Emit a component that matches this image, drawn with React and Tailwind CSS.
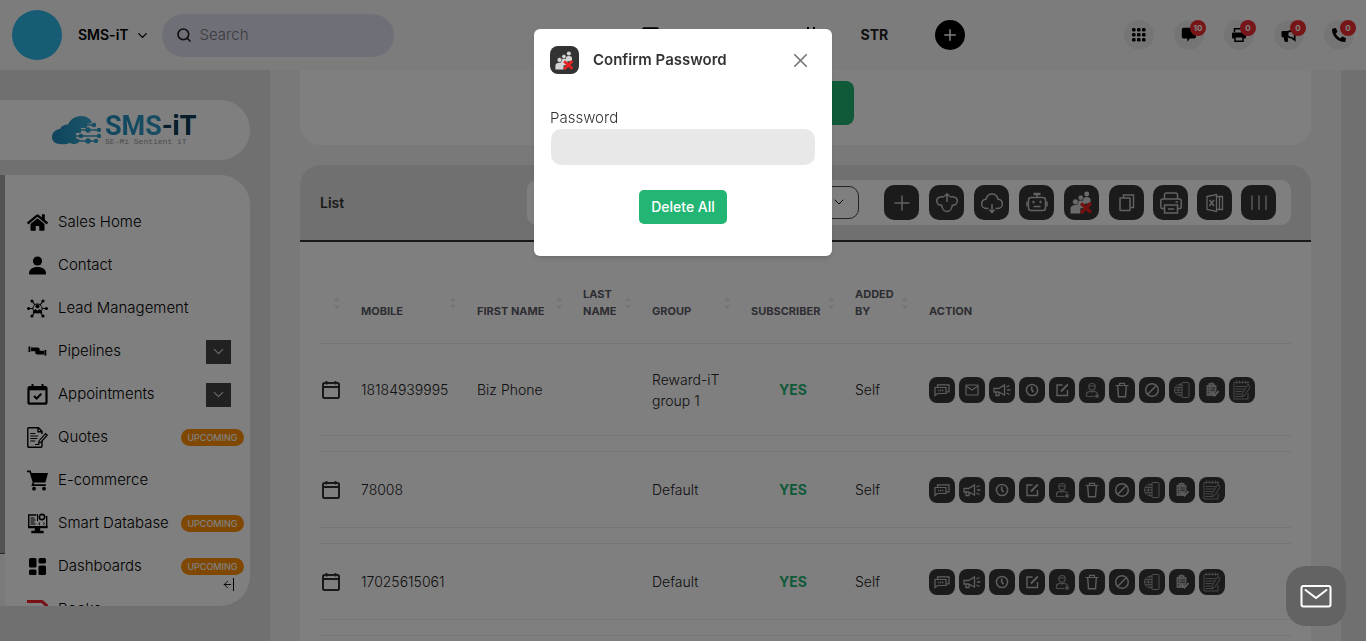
import React, { useState } from 'react';
import { ChevronDown, Search, Plus, X, ArrowLeft } from 'lucide-react';
import { FaHome, FaPhoneAlt, FaUser, FaRegSquare, FaSquare, FaCalendar } from 'react-icons/fa';

const NAV_ITEMS = [
  { label: 'Sales Home', icon: 'home' },
  { label: 'Contact', icon: 'contact' },
  { label: 'Lead Management', icon: 'lead' },
  { label: 'Pipelines', icon: 'pipeline', expandable: true },
  { label: 'Appointments', icon: 'appointment', expandable: true },
  { label: 'Quotes', icon: 'quote', upcoming: true },
  { label: 'E-commerce', icon: 'cart' },
  { label: 'Smart Database', icon: 'database', upcoming: true },
  { label: 'Dashboards', icon: 'dashboard', upcoming: true },
  { label: 'Books', icon: 'books' },
];

const COLUMNS = [
  { key: 'select', label: '', width: 'w-[41px]' },
  { key: 'mobile', label: 'Mobile', width: 'w-[116px]' },
  { key: 'first', label: 'First Name', width: 'w-[106px]' },
  { key: 'last', label: 'Last Name', width: 'w-[69px]' },
  { key: 'group', label: 'Group', width: 'w-[99px]' },
  { key: 'subscriber', label: 'Subscriber', width: 'w-[104px]' },
  { key: 'added', label: 'Added By', width: 'w-[74px]' },
];

const BASE_ACTIONS = ['campaign', 'clock', 'edit', 'person', 'trash', 'block', 'globe', 'clipboard', 'notes'];

const ROWS = [
  { mobile: '18184939995', first: 'Biz Phone', group: 'Reward-iT group 1', actions: ['chat', 'mail', ...BASE_ACTIONS], height: 'h-[93px]' },
  { mobile: '78008', first: '', group: 'Default', actions: ['chat', ...BASE_ACTIONS], height: 'h-[77px]' },
  { mobile: '17025615061', first: '', group: 'Default', actions: ['chat', ...BASE_ACTIONS], height: 'h-[77px]' },
];

function NavIcon({ name }) {
  switch (name) {
    case 'home':
      return <FaHome size={21} />;
    case 'contact':
      return (
        <svg width="21" height="21" viewBox="0 0 21 21" fill="currentColor">
          <circle cx="10.500" cy="6" r="4.600" />
          <path d="M2 18.500c0-4.200 3.600-6.500 8.500-6.500s8.500 2.300 8.500 6.500c0 .6-.3 1-1 1H3c-.7 0-1-.4-1-1z" />
        </svg>
      );
    case 'lead':
      return (
        <svg width="21" height="21" viewBox="0 0 21 21" fill="currentColor" stroke="currentColor">
          <path d="M5 3l3 4M16 3l-3 4M2 10.500h4M15 10.500h4M5 18l3-4M16 18l-3-4" strokeWidth="1.200" />
          <circle cx="10.500" cy="10.500" r="4.600" fill="none" strokeWidth="1" />
          <g stroke="none">
            <circle cx="5" cy="3" r="1.600" />
            <circle cx="16" cy="3" r="1.600" />
            <circle cx="1.600" cy="10.500" r="1.600" />
            <circle cx="19.400" cy="10.500" r="1.600" />
            <circle cx="5" cy="18" r="1.600" />
            <circle cx="16" cy="18" r="1.600" />
            <circle cx="10.500" cy="8.300" r="2" />
            <path d="M5.800 15c0-2.600 1.700-3.800 3.200-3.800l1.500 1.600 1.500-1.600c1.500 0 3.200 1.200 3.200 3.800z" />
          </g>
        </svg>
      );
    case 'pipeline':
      return (
        <svg width="21" height="21" viewBox="0 0 21 21" fill="currentColor">
          <path d="M1.500 5.500h1.800v5.500H1.500zM4 6.500h6.500c1.600 0 2.200.8 2.200 2v1.300H16v3.800h-5.500c-1.600 0-2.200-.8-2.200-2v-1.300H4z" />
          <path d="M17.400 9h1.900v5.600h-1.900zM16 9.800h1v3.800h-1z" />
        </svg>
      );
    case 'appointment':
      return (
        <svg width="21" height="21" viewBox="0 0 21 21" fill="none" stroke="currentColor">
          <rect x="1.500" y="3" width="18" height="16.700" rx="1.500" strokeWidth="2.200" />
          <path d="M1 4.500h19" strokeWidth="3.600" />
          <path d="M5.500 0v4M15.500 0v4" strokeWidth="2" />
          <path d="M7 12l2.600 2.500 4.700-4.800" strokeWidth="2" />
        </svg>
      );
    case 'quote':
      return (
        <svg width="21" height="21" viewBox="0 0 21 21" fill="none" stroke="currentColor" strokeWidth="1.400">
          <path d="M15 14v5.300a1 1 0 0 1-1 1H1.800a1 1 0 0 1-1-1V1.700a1 1 0 0 1 1-1h9.700L15 4.300V7" />
          <path d="M11 1v3.700h4" />
          <path d="M3.300 6.500h5M3.300 9h8M3.300 11.500h7M3.300 14h5M8 17.500h4.500" strokeWidth="1.100" />
          <path d="M18.500 6.700l1.700 1.500-6.300 7-2.300.9.600-2.400z" strokeWidth="1.200" />
        </svg>
      );
    case 'cart':
      return (
        <svg width="21" height="21" viewBox="0 0 21 21" fill="currentColor">
          <path d="M0 .5h3.600l1 2.500H21l-2.600 9.500H7.200l-.6 1.800h12.200V16H4.300l1.400-3.800L2.500 2.300H0z" />
          <circle cx="7" cy="18.700" r="1.900" />
          <circle cx="17" cy="18.700" r="1.900" />
        </svg>
      );
    case 'database':
      return (
        <svg width="21" height="21" viewBox="0 0 21 21" fill="none" stroke="currentColor" strokeWidth="1.400">
          <path d="M9.500 2H1.700v12.500h18V3" />
          <path d="M3.500 5h4M3.500 7h5M3.500 9h4M3.500 11h5M13 9.500l-1.300 1.200L13 11.900M16.300 9.500l1.300 1.200-1.300 1.200M10.500 1v7" strokeWidth="1" />
          <circle cx="15" cy="4" r="2.700" strokeWidth="1.700" />
          <path d="M1 14h19.500" strokeWidth="2" />
          <path d="M8.500 15h4v3h-4zM5 18.500h11v1H5z" fill="currentColor" />
        </svg>
      );
    case 'dashboard':
      return (
        <svg width="21" height="21" viewBox="0 0 21 21" fill="currentColor">
          <rect x="2" y="2" width="7.500" height="9.500" rx="1.500" />
          <rect x="11.500" y="2" width="7.500" height="5.500" rx="1.500" />
          <rect x="2" y="13.500" width="7.500" height="5.500" rx="1.500" />
          <rect x="11.500" y="9.500" width="7.500" height="9.500" rx="1.500" />
        </svg>
      );
    default:
      return (
        <svg width="21" height="21" viewBox="0 0 21 21" fill="none" stroke="#f0222c" strokeWidth="3">
          <path d="M0 2.500h15l4.500 4V19" />
        </svg>
      );
  }
}

function GroupDeleteIcon({ size }) {
  return (
    <svg width={size} height={size} viewBox="0 0 24 24">
      <g fill="#d4d4d4">
        <circle cx="17.500" cy="3.200" r="2.600" />
        <path d="M13.500 13V9.500c0-2.500 1.700-3.300 4-3.300s4 .8 4 3.300V13z" />
        <circle cx="11.300" cy="7" r="2.700" stroke="#363636" strokeWidth=".6" />
        <path d="M7 18v-4.700c0-2.400 1.800-3.400 4.300-3.400s4.300 1 4.300 3.400V18z" />
        <circle cx="5.700" cy="11.300" r="3" stroke="#363636" strokeWidth=".6" />
        <path d="M.5 23.500v-4.800c0-2.800 2-4 5.200-4s5.200 1.200 5.200 4v4.800z" />
      </g>
      <path d="M11.500 13l10.500 9.500M22 12.500L11.500 23" stroke="#e62222" strokeWidth="3.600" />
    </svg>
  );
}

function ToolIcon({ name }) {
  const props = { width: 24, height: 24, viewBox: '0 0 24 24', fill: 'none', stroke: '#c4c4c4', strokeWidth: 1.5 };
  switch (name) {
    case 'add':
      return <svg {...props}><path d="M12 4.500v15M4.500 12h15" /></svg>;
    case 'upload':
      return (
        <svg {...props}>
          <path d="M9 6C5.500 5 1.500 6.500 1.700 10c.2 3 2.500 4.600 5 4.300C7.200 18 9.500 20.500 12 20.500s4.800-2.500 5.300-6.200c2.500.3 4.800-1.300 5-4.300.2-3.500-3.800-5-7.300-4" />
          <path d="M12 11V3M9.300 5.500L12 2.800l2.700 2.700" />
        </svg>
      );
    case 'download':
      return (
        <svg {...props}>
          <path d="M8.500 17.500H7c-3.200 0-5.300-2-5.300-4.600 0-2.500 1.800-4.400 4.300-4.600C6.700 5 9 3 12 3s5.300 2 6 5.300c2.500.2 4.300 2.100 4.300 4.600 0 2.600-2.100 4.600-5.300 4.600h-1.500" />
          <path d="M12 13v8M9.300 18.700l2.700 2.700 2.700-2.700" />
        </svg>
      );
    case 'robot':
      return (
        <svg {...props}>
          <rect x="3.500" y="6.500" width="17" height="13" rx="2.500" />
          <path d="M12 6.500V4M2 10.500v5M22 10.500v5M8.500 15.500h7" />
          <path d="M8.500 3h7" strokeWidth="2.500" />
          <path d="M7.500 11h2M14.500 11h2" strokeWidth="2.500" />
        </svg>
      );
    case 'group':
      return <GroupDeleteIcon size={23} />;
    case 'copy':
      return (
        <svg {...props}>
          <rect x="5" y="7" width="10" height="12.500" rx=".5" />
          <path d="M8.500 6.500V4H18.500v12.500H15.500" />
        </svg>
      );
    case 'print':
      return (
        <svg {...props}>
          <path d="M5.500 8V4c0-1.200.8-2 2-2h9c1.200 0 2 .8 2 2v4M5.500 17.500H3.300c-1 0-1.500-.6-1.500-1.500V10c0-1.200.8-2 2-2h16.400c1.200 0 2 .8 2 2v6c0 .9-.5 1.500-1.500 1.500h-2.200" />
          <path d="M5.500 14h13v8h-13zM9 18h6M16.500 11h2.500" />
        </svg>
      );
    case 'excel':
      return (
        <svg {...props} strokeWidth="1.300">
          <path d="M4 5.500L13.500 3.500v17L4 18.500zM13.500 5.500h6v13h-6M16.500 5.500v13" />
          <path d="M6.500 9l4.500 6M11 9l-4.500 6" strokeWidth="1.600" />
        </svg>
      );
    default:
      return <svg {...props} strokeWidth="1.300"><path d="M5 4.500v14.500M12 4.500v14.500M19 4.500v14.500" /></svg>;
  }
}

function ActionIcon({ name }) {
  const props = { width: 18, height: 18, viewBox: '0 0 18 18', fill: 'none', stroke: '#bdbdbd', strokeWidth: 1.2 };
  switch (name) {
    case 'chat':
      return (
        <svg {...props}>
          <path d="M2 14.500V6.500h11v6H4.500z" />
          <path d="M4.500 6.300V3.800h11.500v7h-2.700" />
          <path d="M5 9.500h1.300M7 9.500h1.300M9 9.500h1.300" strokeWidth="1.500" />
        </svg>
      );
    case 'mail':
      return <svg {...props}><rect x="3" y="4" width="12" height="10" rx=".6" /><path d="M3 5l6 4 6-4" /></svg>;
    case 'campaign':
      return (
        <svg {...props} strokeWidth="1.300">
          <path d="M1 7.500h4.500L11.500 4v10l-6-3H1zM3 11v3.500h3V11M13.500 6l3-1.500M14 9h3.500M13.500 12l3 1.500" />
        </svg>
      );
    case 'clock':
      return <svg {...props}><circle cx="9" cy="9" r="5.600" strokeWidth="1.500" /><path d="M8.700 5.500v3.300l1.800 2.500" strokeWidth="1.600" /></svg>;
    case 'edit':
      return <svg {...props}><path d="M9.500 4H4v10.500h10.500V9" strokeWidth="1.400" /><path d="M8 10.500L14.800 3.500" strokeWidth="1.800" /></svg>;
    case 'person':
      return (
        <svg {...props} stroke="#999">
          <path d="M5.800 5.500c0-4 6.400-4 6.400 0 0 2-1.300 3.700-3.200 3.700S5.800 7.500 5.800 5.500zM6 5h6" />
          <path d="M3.500 15.500v-2.300c0-1.500 1-2.200 2.500-2.500l1.500-.5 1.500.8 1.500-.8 1.500.5c1.500.3 2.500.8 2.500 2M3.500 15.500h8" />
          <circle cx="14" cy="14.900" r="1.300" fill="#999" />
        </svg>
      );
    case 'trash':
      return <svg {...props}><path d="M2.500 4.500h13M6.500 4V2.300h5V4" /><path d="M4.700 5l.8 10.700h7L13.300 5" strokeWidth="1.400" /></svg>;
    case 'block':
      return <svg {...props}><circle cx="9" cy="9" r="6.300" strokeWidth="1.500" /><path d="M4.800 13.200l8.400-8.400" strokeWidth="1.500" /></svg>;
    case 'globe':
      return (
        <svg {...props} stroke="#9c9c9c" strokeWidth="1">
          <rect x="9" y="1.500" width="7" height="15" rx="1" />
          <path d="M9 3C3.800 3 1.500 6 1.500 9S3.800 15 9 15M9 3C6 4 5.200 6.500 5.200 9s.8 5 3.800 6M2 6.500h7M1.500 9H9M2 11.700h7" />
        </svg>
      );
    case 'clipboard':
      return (
        <svg {...props}>
          <path d="M3.500 4h10v5.500l-3 5.500h-7z" fill="#a8a8a8" stroke="none" />
          <path d="M6.300 4.200V3.100h1.400l.8-1 .8 1h1.400v1.100" strokeWidth="1.500" />
          <path d="M5 7h1M7.500 7h4.500M5 9.300h1M7.500 9.300h4.500M5 11.600h1" stroke="#363636" strokeWidth=".8" />
          <path d="M9 12l2.500 2.700 4-4.600" strokeWidth="1.900" />
        </svg>
      );
    default:
      return (
        <svg width="20" height="22" viewBox="0 0 20 22" fill="none" stroke="#8c8c8c" strokeWidth="1">
          <path d="M2 3.500h14V7M16 14v6H2V3.500" />
          <path d="M4.500 1.500v3M7.500 1.500v3M10.500 1.500v3M13.500 1.500v3M16 2v2" />
          <path d="M3.500 7.500h10M3.500 10h9M3.500 12.500h7M3.500 15h6M3.500 17.500h8" />
          <path d="M15 6.500c2-1 3.500 0 2.500 2.500l-5 7.500-2.500 1 .5-3z" />
        </svg>
      );
  }
}

function TopIcon({ name }) {
  switch (name) {
    case 'apps':
      return (
        <svg width="16" height="16" viewBox="0 0 16 16" fill="currentColor">
          {[1, 6, 11].map((y) => [1, 6, 11].map((x) => <rect key={`${x}-${y}`} x={x} y={y} width="3.600" height="3.600" rx="1.400" />))}
        </svg>
      );
    case 'chat':
      return (
        <svg width="16" height="16" viewBox="0 0 16 16" fill="currentColor">
          <path d="M2.500.8h10.700c1 0 1.800.7 1.800 1.700v7.300c0 1-.8 1.700-1.800 1.700H9L6.300 14.700v-3.200H2.500c-1 0-1.700-.7-1.700-1.700V2.500c0-1 .7-1.700 1.700-1.700z" />
        </svg>
      );
    case 'print':
      return (
        <svg width="16" height="16" viewBox="0 0 16 16" fill="none" stroke="currentColor">
          <path d="M3.500 5V1.700h8.300V4" strokeWidth="1.500" />
          <path d="M2 6.500h12v4H2z" fill="currentColor" strokeWidth="2" strokeLinejoin="round" />
          <path d="M4 9.800h8v4.400H4z" fill="#e6e6e6" strokeWidth="1.500" />
        </svg>
      );
    case 'campaign':
      return (
        <svg width="16" height="16" viewBox="0 0 16 16" fill="none" stroke="currentColor">
          <path d="M1 4.500h6v5.300H1z" fill="currentColor" />
          <path d="M7 4.700c2.500-.2 5-1.400 6.700-2.900v11c-1.700-1.600-4.200-2.900-6.700-3M13.700 1v12.500" strokeWidth="1.800" />
          <path d="M3 10h3l.8 4.300H4z" fill="currentColor" />
        </svg>
      );
    default:
      return <FaPhoneAlt size={14} className="-scale-x-100 rotate-90" />;
  }
}

const TOP_ACTIONS = [
  { name: 'apps', label: 'Apps' },
  { name: 'chat', label: 'Messages', count: 10 },
  { name: 'print', label: 'Fax', count: 0 },
  { name: 'campaign', label: 'Campaigns', count: 0 },
  { name: 'phone', label: 'Calls', count: 0 },
];

const QUICK_LINKS = [
  { label: 'People', Icon: FaUser, size: 13 },
  { label: 'Inbox', Icon: FaSquare, size: 19 },
  { label: 'Notes', Icon: FaRegSquare, size: 13 },
  { label: 'Calendar', Icon: FaCalendar, size: 16 },
];

function Topbar() {
  return (
    <header className="flex h-[70px] shrink-0 items-center bg-[#f8f8f8] px-3">
      <div className="size-[50px] rounded-full bg-[#2cb8ea]" />
      <button type="button" className="ml-4 flex items-center gap-1.5 text-sm font-semibold text-black">
        SMS-iT
        <ChevronDown size={15} strokeWidth={2.2} />
      </button>
      <label className="ml-3 flex h-[43px] w-[232px] items-center gap-2 rounded-full bg-[#dfdff0] px-3.5">
        <Search size={16} strokeWidth={2.5} className="shrink-0 text-[#222]" />
        <input type="text" placeholder="Search" aria-label="Search" className="w-full bg-transparent text-[15px] font-light text-[#333] outline-none placeholder:text-[#777]" />
      </label>

      <nav className="ml-[167px] flex flex-1 items-center">
        <div className="flex w-[300px] gap-[60px]">
          {QUICK_LINKS.map(({ label, Icon, size }) => (
            <button key={label} type="button" aria-label={label} className="grid w-5 place-items-center"><Icon size={size} /></button>
          ))}
        </div>
        <button type="button" className="text-sm font-bold text-[#222]">STR</button>
        <button type="button" aria-label="Create" className="ml-[47px] grid size-[30px] place-items-center rounded-full bg-black text-white">
          <Plus size={18} strokeWidth={2} />
        </button>
      </nav>

      <div className="flex items-center gap-5">
        {TOP_ACTIONS.map((item) => (
          <button key={item.name} type="button" aria-label={item.label} className="relative grid size-[30px] place-items-center rounded-full bg-[#ebebeb] text-black">
            <TopIcon name={item.name} />
            {item.count !== undefined && (
              <span className="absolute top-0 -right-0.5 grid size-4 place-items-center rounded-full bg-[#ee2c30] text-[8px] font-bold text-white">
                {item.count}
              </span>
            )}
          </button>
        ))}
      </div>
    </header>
  );
}

function Logo() {
  return (
    <a href="#home" className="flex h-[60px] w-[250px] items-center gap-0.5 rounded-r-[30px] bg-white pl-[51px]">
      <svg width="52" height="32" viewBox="0 0 52 32">
        <defs>
          <linearGradient id="cloud" x1="0" x2="1">
            <stop offset="0" stopColor="#1c8ab8" />
            <stop offset="1" stopColor="#3aacd6" />
          </linearGradient>
        </defs>
        <path d="M9 30C4 30 1 27 1 23c0-4 3-7.500 8-8 1-3 4-4.500 8-4.500C19 6 24 2 30 2c6 0 10 3 11 7l-5 1v4h-6v5h-5v5l4 2-2 3c-3 1.500-5 1.500-8 0-4 1.500-7 1.500-10 1z" fill="url(#cloud)" />
        <g stroke="#2f9cc6" strokeWidth="1.300" fill="#2f9cc6">
          <path d="M33 11h9M29 16h19M25 22h23M26 27h18" fill="none" />
          <circle cx="43" cy="11" r="1.600" />
          <circle cx="37" cy="16" r="2" />
          <circle cx="48" cy="16" r="1.500" />
          <circle cx="30" cy="22" r="1.700" />
          <circle cx="48" cy="22" r="1.500" />
          <circle cx="37" cy="27" r="2" />
          <circle cx="45" cy="27" r="1.500" />
        </g>
      </svg>
      <span className="flex flex-col">
        <span className="bg-gradient-to-r from-[#2390bf] to-[#3a9fc9] bg-clip-text font-[Roboto] text-[27px] leading-6 font-bold text-transparent">
          SMS<span className="text-[#123a58]">-iT</span>
        </span>
        <span className="font-['Liberation_Mono'] text-[8px] leading-2 text-[#999]">SE-Mi Sentient iT</span>
      </span>
    </a>
  );
}

function Sidebar() {
  return (
    <aside className="flex w-[270px] shrink-0 flex-col bg-[#e0e0e0] pt-[30px]">
      <Logo />
      <div className="relative mt-[15px] mb-[35px] flex min-h-0 w-[250px] flex-1 overflow-hidden rounded-br-[30px] rounded-tr-[30px] bg-white">
        <div className="w-[5px] shrink-0 bg-[#f4f4f4]">
          <div className="h-[88%] border-b border-[#555] bg-[#a6a6a6]" />
        </div>
        <ul className="flex-1 pt-[26px] pr-1.5 pl-[22px]">
          {NAV_ITEMS.map((item) => (
            <li key={item.label} className="flex h-[43px] items-center">
              <a href={`#${item.icon}`} className="flex items-center gap-2.5 text-[15px] font-light whitespace-nowrap text-black">
                <NavIcon name={item.icon} />
                {item.label}
              </a>
              {item.expandable && (
                <button type="button" aria-label={`Expand ${item.label}`} className="mr-[13px] ml-auto grid h-6 w-[25px] place-items-center bg-[#434343] text-[#ddd]">
                  <ChevronDown size={17} strokeWidth={1.5} />
                </button>
              )}
              {item.upcoming && (
                <span className="ml-auto h-[17px] w-[63px] shrink-0 rounded-full bg-[#ff8f00] text-center text-[9px] leading-[17px] font-medium text-white">UPCOMING</span>
              )}
            </li>
          ))}
        </ul>
        <button type="button" aria-label="Collapse menu" className="absolute right-4 bottom-[15px] flex items-center border-r border-black text-black">
          <ArrowLeft size={11} strokeWidth={2} className="my-px" />
        </button>
      </div>
    </aside>
  );
}

const TOOLS = ['add', 'upload', 'download', 'robot', 'group', 'copy'];
const EXPORT_TOOLS = ['print', 'excel', 'columns'];

function ToolButton({ name }) {
  return (
    <button type="button" aria-label={name} className="grid size-[35px] place-items-center rounded-[10px] bg-[#363636]">
      <ToolIcon name={name} />
    </button>
  );
}

function SortArrows() {
  return (
    <svg width="8" height="14" viewBox="0 0 8 14" fill="#e9e9ee" className="shrink-0 self-center">
      <path d="M4 1l3 4H1zM4 13l3-4H1z" />
    </svg>
  );
}

function ContactsTable() {
  return (
    <table className="w-full table-fixed border-separate border-spacing-x-0 border-spacing-y-[15px] text-left text-sm">
      <thead>
        <tr className="text-[11px] leading-[17px] font-bold text-[#5b5b66] uppercase">
          {COLUMNS.map((col) => (
            <th key={col.key} scope="col" className={`${col.width} h-[71px] p-0 pb-2 align-bottom`}>
              <div className="flex h-[34px] items-end justify-between pr-5">
                <span>{col.label}</span>
                <SortArrows />
              </div>
            </th>
          ))}
          <th scope="col" className="p-0 pb-2 align-bottom">Action</th>
        </tr>
      </thead>
      <tbody className="font-light text-[#222]">
        {ROWS.map((row) => (
          <tr key={row.mobile} className={`${row.height} *:border-y *:border-[#ebebee] *:p-0`}>
            <td>
              <svg width="22" height="22" viewBox="0 0 22 22" fill="none" stroke="#333" strokeWidth="2">
                <rect x="3" y="4" width="16" height="15" rx="1.500" />
                <path d="M3 8h16M6.500 2v3.500M15.500 2v3.500" strokeWidth="1.800" />
              </svg>
            </td>
            <td>{row.mobile}</td>
            <td>{row.first}</td>
            <td />
            <td className="pr-5! leading-[21px]">{row.group}</td>
            <td className="pr-5! text-center font-bold text-[#21b573]">YES</td>
            <td>Self</td>
            <td>
              <div className="flex gap-1">
                {row.actions.map((name) => (
                  <button key={name} type="button" aria-label={name} className="grid size-[26px] place-items-center rounded-lg bg-[#363636]">
                    <ActionIcon name={name} />
                  </button>
                ))}
              </div>
            </td>
          </tr>
        ))}
        <tr className="h-[77px] *:border-y *:border-[#ebebee]">
          <td colSpan={8} />
        </tr>
      </tbody>
    </table>
  );
}

function ConfirmPasswordModal({ onClose }) {
  const [password, setPassword] = useState('');

  return (
    <div className="fixed inset-0 z-20 flex items-start justify-center bg-black/50 pt-[29px]">
      <form
        role="dialog"
        aria-label="Confirm Password"
        onSubmit={(e) => e.preventDefault()}
        className="flex w-[298px] flex-col rounded-md bg-white px-4 pt-[17px] pb-8 shadow-md"
      >
        <div className="flex h-7 items-center">
          <span className="grid h-7 w-[29px] place-items-center rounded-lg bg-[#333]">
            <GroupDeleteIcon size={19} />
          </span>
          <h2 className="ml-3.5 text-[15px] font-semibold text-[#333]">Confirm Password</h2>
          <button type="button" aria-label="Close" onClick={onClose} className="ml-auto pr-1 text-[#777]">
            <X size={23} strokeWidth={1.8} />
          </button>
        </div>
        <label htmlFor="password" className="mt-[33px] text-[15px] leading-[22px] font-light text-[#333]">Password</label>
        <input
          id="password"
          type="password"
          value={password}
          onChange={(e) => setPassword(e.target.value)}
          className="mx-px h-9 rounded-[10px] bg-[#e8e8e8] px-3 text-sm outline-none"
        />
        <button type="submit" className="mt-[25px] h-[34px] w-[88px] self-center rounded-[5px] bg-[#22b573] text-sm font-medium text-white">
          Delete All
        </button>
      </form>
    </div>
  );
}

export default function App() {
  const [confirmOpen, setConfirmOpen] = useState(true);

  return (
    <div className="flex h-screen flex-col overflow-hidden bg-[#f3f3f3] font-[Inter,sans-serif]">
      <Topbar />
      <div className="flex min-h-0 flex-1">
        <Sidebar />
        <main className="min-w-0 flex-1 overflow-hidden px-[30px]">
          <section className="flex h-[75px] items-start justify-center rounded-b-[20px] bg-white pt-[11px]">
            <button type="button" className="h-11 w-[97px] rounded-lg bg-[#21b573] text-sm font-medium text-white">Add</button>
          </section>

          <section className="mt-5 rounded-t-[20px] bg-white">
            <div className="flex h-[77px] items-center rounded-t-[20px] border-b-2 border-[#333] bg-[#e0e0e0] px-5">
              <h2 className="text-sm font-semibold text-[#333]">List</h2>
              <div className="ml-auto flex h-[45px] w-[764px] items-center justify-end rounded-[10px] bg-white pr-[15px]">
                <div className="relative mr-[25px]">
                  <select aria-label="Page size" className="h-[33px] w-[120px] appearance-none rounded-[10px] border border-[#444] bg-white pl-3 text-sm">
                    <option>10</option>
                    <option>25</option>
                  </select>
                  <ChevronDown size={16} strokeWidth={1.5} className="pointer-events-none absolute top-2 right-3" />
                </div>
                <div className="flex gap-2.5">
                  {TOOLS.map((name) => <ToolButton key={name} name={name} />)}
                </div>
                <div className="ml-[9px] flex gap-[9px]">
                  {EXPORT_TOOLS.map((name) => <ToolButton key={name} name={name} />)}
                </div>
              </div>
            </div>
            <div className="px-5">
              <ContactsTable />
            </div>
          </section>
        </main>
        <div className="w-[25px] shrink-0 bg-[#e0e0e0]" />
      </div>

      <button type="button" aria-label="Open messages" className="fixed right-5 bottom-[15px] z-30 grid size-[60px] place-items-center rounded-[20px] bg-[#636363]">
        <svg width="32" height="24" viewBox="0 0 32 24" fill="none" stroke="#fff" strokeWidth="2">
          <rect x="1.500" y="2" width="29" height="20.500" rx="2" />
          <path d="M5.500 6l10.500 8 10.500-8" strokeLinecap="round" />
        </svg>
      </button>

      {confirmOpen && <ConfirmPasswordModal onClose={() => setConfirmOpen(false)} />}
    </div>
  );
}
